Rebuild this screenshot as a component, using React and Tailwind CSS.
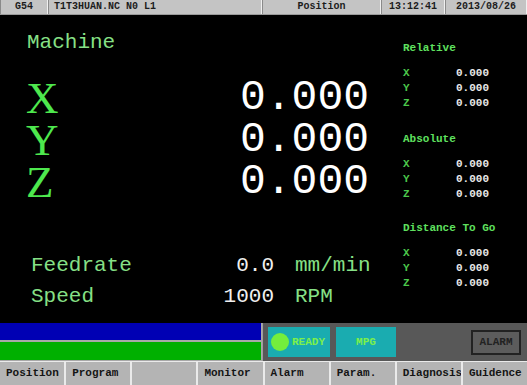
const axes = ['X', 'Y', 'Z'];

const sections = [
  { title: 'Relative', mt: 'mt-[26px]' },
  { title: 'Absolute', mt: 'mt-[21px]' },
  { title: 'Distance To Go', mt: 'mt-[19px]' },
];

const tabs = ['Position', 'Program', '', 'Monitor', 'Alarm', 'Param.', 'Diagnosis', 'Guidence'];

const HeaderCell = ({ className, children }) => (
  <div className={`h-full flex items-center border-r border-r-[#f0f0f0] border-l border-l-[#8a8a8a] ${className}`}>
    {children}
  </div>
);

export default function App() {
  return (
    <div className="w-[527px] h-[385px] flex flex-col bg-black overflow-hidden font-['Liberation_Mono',monospace]">
      {/* top status bar */}
      <div className="h-[15px] flex bg-[#c4c4c4] text-[#1c1c1c] text-[10px] font-bold leading-none border-b border-[#9a9a9a]">
        <HeaderCell className="w-[48px] justify-center">G54</HeaderCell>
        <HeaderCell className="w-[214px] pl-[5px]">T1T3HUAN.NC N0 L1</HeaderCell>
        <HeaderCell className="w-[119px] justify-center">Position</HeaderCell>
        <HeaderCell className="w-[64px] justify-center">13:12:41</HeaderCell>
        <HeaderCell className="flex-1 justify-center">2013/08/26</HeaderCell>
      </div>

      {/* main display */}
      <div className="flex-1 flex">
        <div className="w-[390px] flex flex-col">
          <div className="pl-[27px] pt-[17px] text-[21px] leading-[21px] text-[#86e086]">Machine</div>
          <div className="mt-[24px] flex flex-col">
            {axes.map((a) => (
              <div key={a} className="h-[42px] flex items-center">
                <span className="w-[240px] pl-[26px] font-['Liberation_Serif',serif] text-[45px] leading-[42px] text-[#4ee84e]">
                  {a}
                </span>
                <span className="text-[43px] leading-[42px] text-white">0.000</span>
              </div>
            ))}
          </div>
          <div className="mt-[47px] flex flex-col text-[21px] leading-[31px]">
            <div className="flex">
              <span className="w-[200px] pl-[31px] text-[#86e086]">Feedrate</span>
              <span className="w-[74px] text-right text-[#f0f0f0]">0.0</span>
              <span className="pl-[21px] text-[#86e086]">mm/min</span>
            </div>
            <div className="flex">
              <span className="w-[200px] pl-[31px] text-[#86e086]">Speed</span>
              <span className="w-[74px] text-right text-[#f0f0f0]">1000</span>
              <span className="pl-[21px] text-[#86e086]">RPM</span>
            </div>
          </div>
        </div>

        <div className="flex-1 flex flex-col pl-[13px] text-[11px] font-bold leading-[15px]">
          {sections.map((s) => (
            <div key={s.title} className={s.mt}>
              <div className="text-[#5fe05f] mb-[10px]">{s.title}</div>
              {axes.map((a) => (
                <div key={a} className="flex">
                  <span className="w-[53px] text-[#4cc84c]">{a}</span>
                  <span className="text-[#e8e8e8]">0.000</span>
                </div>
              ))}
            </div>
          ))}
        </div>
      </div>

      {/* status strip */}
      <div className="h-[38px] flex">
        <div className="w-[262px] flex flex-col bg-[#a8a8a8] gap-[2px] pb-[1px] pr-[1px]">
          <div className="h-[17px] bg-[#0000b4]" />
          <div className="flex-1 bg-[#00b000]" />
        </div>
        <div className="flex-1 flex items-center bg-[#585858] border-l border-[#a0a0a0] pl-[5px] pr-[6px] gap-[6px]">
          <div className="w-[62px] h-[30px] flex items-center gap-[3px] pl-[3px] bg-[#1aacb0] text-[#7cf04a] text-[11px] font-bold">
            <span className="w-[18px] h-[18px] rounded-full bg-[#74ee3c]" />
            READY
          </div>
          <div className="w-[60px] h-[30px] flex items-center justify-center bg-[#1aacb0] text-[#7cf04a] text-[11px] font-bold">
            MPG
          </div>
          <div className="ml-auto w-[50px] h-[25px] flex items-center justify-center bg-[#5c5c5c] border-2 border-[#222] text-[#222] text-[11px] font-bold">
            ALARM
          </div>
        </div>
      </div>

      {/* soft keys */}
      <div className="h-[24px] grid grid-cols-8 bg-[#eaeaea] gap-[2px] pt-[1px]">
        {tabs.map((t, i) => (
          <div
            key={i}
            className="flex items-center pl-[6px] bg-[#b4b4b4] text-[11px] font-bold text-[#151515] whitespace-nowrap overflow-hidden"
          >
            {t}
          </div>
        ))}
      </div>
    </div>
  );
}
